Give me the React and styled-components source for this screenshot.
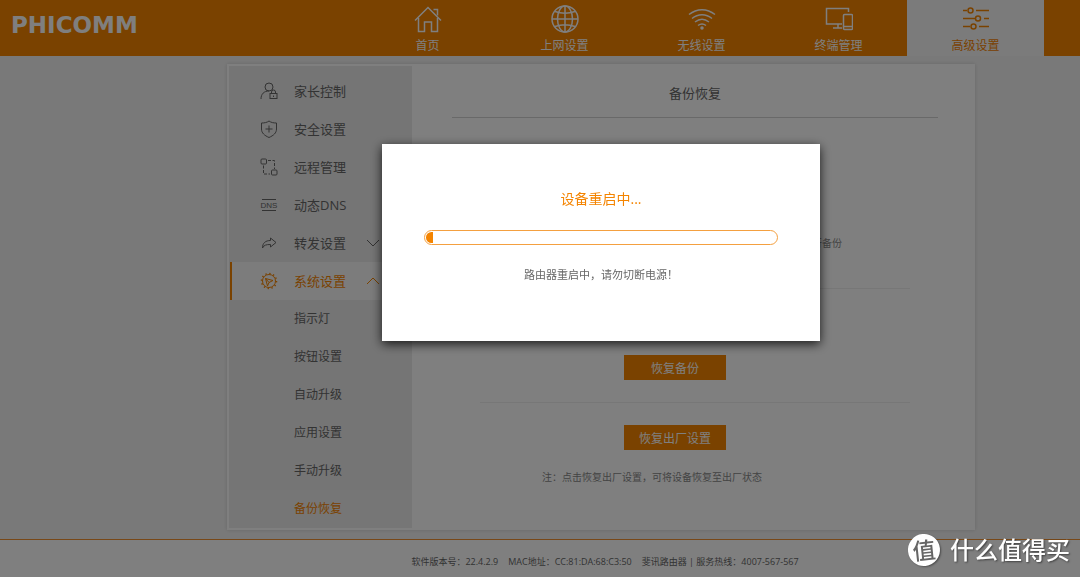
import React from "react";
import styled, { createGlobalStyle } from "styled-components";

const navItems = [
  { id: "home", label: "首页" },
  { id: "globe", label: "上网设置" },
  { id: "wifi", label: "无线设置" },
  { id: "devices", label: "终端管理" },
  { id: "sliders", label: "高级设置", active: true },
];

const menuItems = [
  { id: "parent", label: "家长控制" },
  { id: "shield", label: "安全设置" },
  { id: "remote", label: "远程管理" },
  { id: "dns", label: "动态DNS" },
  { id: "forward", label: "转发设置", arrow: "down" },
  { id: "gear", label: "系统设置", arrow: "up", active: true },
];

const subItems = ["指示灯", "按钮设置", "自动升级", "应用设置", "手动升级", "备份恢复"];

// Иконки верхнего меню
const navIcons = {
  home: (
    <>
      <path d="M1 15.500 14 2.500l13 13" />
      <path d="M4.500 13v13.500h6v-9.500h7v9.500h6V13" />
      <path d="M19.500 4.500h4v6" />
    </>
  ),
  globe: (
    <>
      <circle cx="14" cy="14" r="13" />
      <ellipse cx="14" cy="14" rx="7.500" ry="13" />
      <path d="M14 1v26M1 14h26M4 6.500c6 2 14 2 20 0M4 21.500c6-2 14-2 20 0" />
    </>
  ),
  wifi: (
    <>
      <path d="M1 9.500c8-6.500 18-6.500 26 0" />
      <path d="M4 13.500c6-5 14-5 20 0" />
      <path d="M7 17c4.500-3.500 9.500-3.500 14 0" />
      <path d="M10 20.500c2.500-2 5.500-2 8 0" />
      <circle cx="14" cy="23" r="1" fill="currentColor" />
    </>
  ),
  devices: (
    <>
      <path d="M23.500 7V3.500h-22v15.500h15.500" />
      <path d="M13 19v4M8 23h9" />
      <rect x="18.500" y="9.500" width="9" height="15" rx="1" />
      <path d="M18.500 21.500h9" />
    </>
  ),
  sliders: (
    <>
      <path d="M1 5.500h4M14 5.500h13M1 13.500h12M22 13.500h5M1 21.500h7M17 21.500h10" />
      <circle cx="8.500" cy="5.500" r="2.500" />
      <circle cx="16" cy="13.500" r="2.500" />
      <circle cx="11.500" cy="21.500" r="2.500" />
    </>
  ),
};

// Иконки боковой панели
const menuIcons = {
  parent: (
    <>
      <circle cx="9" cy="5" r="4" />
      <path d="M1 17c0-5 3-8 8-8" />
      <rect x="10" y="11.500" width="7" height="5" />
      <path d="M11.500 11.500V10a2 2 0 0 1 4 0v1.500M13.500 13.500v1.500" />
    </>
  ),
  shield: (
    <>
      <path d="M9 1c2 1.500 4.500 2 7.500 2v6c0 4-3 6.500-7.500 8.500C4.500 15.500 1.500 13 1.500 9V3C4.500 3 7 2.500 9 1z" />
      <path d="M9 5.500v7M5.500 9h7" />
    </>
  ),
  remote: (
    <>
      <rect x="1" y="1" width="5.500" height="5" rx="1" />
      <rect x="11.500" y="12" width="5.500" height="5" rx="1" />
      <path strokeDasharray="3 1.500" d="M8 2.500h6.500V11M3.500 7.500v8.500H10" />
    </>
  ),
  dns: (
    <>
      <path d="M2 3.500h14M2 14.500h14" />
      <text x="9" y="12" fontSize="8" textAnchor="middle" fill="currentColor" stroke="none" fontFamily="Liberation Sans, sans-serif">
        DNS
      </text>
    </>
  ),
  forward: (
    <path d="M10.500 4 16 8.500 10.500 13v-2.500C6 10.500 4 11 2.500 14 2.500 9 5.500 6.500 10.500 6.500z" />
  ),
  gear: (
    <>
      <circle cx="9" cy="9" r="6.500" />
      <circle cx="9" cy="9" r="7.500" strokeWidth="1.500" strokeDasharray="1.400 2.527" />
      <path d="M5.500 6.500 13 8.500 9 10.500 7.500 14zM5.500 6.500 9 10.500" />
    </>
  ),
};

const Icon = ({ size, children }) => (
  <IconSvg $size={size} viewBox={`0 0 ${size} ${size}`} aria-hidden="true">
    {children}
  </IconSvg>
);

const RebootModal = ({ progress }) => (
  <Overlay>
    <ModalCon role="dialog" aria-modal="true" aria-labelledby="reboot-title">
      <ModalTitle id="reboot-title">设备重启中...</ModalTitle>
      <ProgressTrack role="progressbar" aria-labelledby="reboot-title" aria-valuenow={progress}>
        <ProgressFill style={{ width: `${progress}%` }} />
      </ProgressTrack>
      <ModalMessage>路由器重启中，请勿切断电源！</ModalMessage>
    </ModalCon>
  </Overlay>
);

const App = () => {
  return (
    <>
      <GlobalStyle />
      <Page>
        <Header>
          <Logo>PHICOMM</Logo>
          <Nav>
            {navItems.map((item) => (
              <NavLink key={item.id} href="#" $active={item.active}>
                <Icon size={28}>{navIcons[item.id]}</Icon>
                {item.label}
              </NavLink>
            ))}
          </Nav>
        </Header>

        <Body>
          <Card>
            <Sidebar>
              {menuItems.map((item) => (
                <MenuLink key={item.id} href="#" $active={item.active}>
                  <Icon size={18}>{menuIcons[item.id]}</Icon>
                  <MenuLabel>{item.label}</MenuLabel>
                  {item.arrow && (
                    <Icon size={14}>
                      <path d={item.arrow === "up" ? "M1 10l6-6 6 6" : "M1 4l6 6 6-6"} />
                    </Icon>
                  )}
                </MenuLink>
              ))}
              {subItems.map((label) => (
                <SubLink key={label} href="#" $active={label === "备份恢复"}>
                  {label}
                </SubLink>
              ))}
            </Sidebar>

            <Content>
              <ContentTitle>备份恢复</ContentTitle>
              <Section $top={73} $bottom={34}>
                <Button>备份</Button>
                <Note>注：点击备份，可将当前设备的配置信息保存到本地电脑中进行备份</Note>
              </Section>
              <Section $top={66} $bottom={22}>
                <Button>恢复备份</Button>
              </Section>
              <Section $top={22} $bottom={0}>
                <Button>恢复出厂设置</Button>
                <Note>注：点击恢复出厂设置，可将设备恢复至出厂状态</Note>
              </Section>
            </Content>
          </Card>
        </Body>

        <Footer>
          <span>软件版本号：22.4.2.9</span>
          <span>MAC地址：CC:81:DA:68:C3:50</span>
          <span>斐讯路由器 | 服务热线：4007-567-567</span>
        </Footer>
      </Page>

      <RebootModal progress={2} />

      <Watermark>
        <WatermarkBadge>值</WatermarkBadge>
        什么值得买
      </Watermark>
    </>
  );
};

export default App;

const GlobalStyle = createGlobalStyle`
  * {
    box-sizing: border-box;
  }
  body {
    margin: 0;
    background-color: #f3f3f3;
    color: #666;
    font-family: "Open Sans", "Noto Sans CJK SC", sans-serif;
    font-size: 12px;
  }
  a {
    color: inherit;
    text-decoration: none;
  }
`;

const Page = styled.div`
  display: flex;
  flex-direction: column;
  min-height: 100vh;
`;

const IconSvg = styled.svg`
  flex: none;
  width: ${({ $size }) => $size}px;
  height: ${({ $size }) => $size}px;
  fill: none;
  stroke: currentColor;
  stroke-width: ${({ $size }) => ($size === 28 ? 1.5 : 1)};
`;

const Header = styled.header`
  display: flex;
  justify-content: space-between;
  height: 56px;
  padding: 0 36px 0 11px;
  background-color: #f48400;
  color: #fff;
`;

const Logo = styled.div`
  font-family: "DejaVu Sans", sans-serif;
  font-size: 23px;
  font-weight: bold;
  line-height: 50px;
`;

const Nav = styled.nav`
  display: flex;
`;

const NavLink = styled.a`
  display: flex;
  flex-direction: column;
  align-items: center;
  gap: 5px;
  width: 137px;
  padding-top: 5px;
  line-height: 16px;
  && {
    color: ${({ $active }) => ($active ? "#f48400" : "#fff")};
  }
  background-color: ${({ $active }) => ($active ? "#f7f7f7" : "transparent")};
`;

const Body = styled.main`
  flex: 1;
  padding: 8px 105px 8px 227px;
`;

const Card = styled.div`
  display: flex;
  padding: 2px;
  background-color: #fff;
  box-shadow: 0 0 4px rgba(0, 0, 0, 0.15);
`;

const Sidebar = styled.nav`
  flex: none;
  width: 183px;
  padding-top: 6px;
  background-color: #eaeaea;
`;

const MenuLink = styled.a`
  display: flex;
  align-items: center;
  gap: 16px;
  height: 38px;
  margin-left: 1px;
  padding: 0 32px 0 28px;
  border-left: 2px solid ${({ $active }) => ($active ? "#f48400" : "transparent")};
  background-color: ${({ $active }) => ($active ? "#f8f8f8" : "transparent")};
  && {
    color: ${({ $active }) => ($active ? "#f48400" : "#666")};
  }
`;

const MenuLabel = styled.span`
  flex: 1;
  padding-bottom: 2px;
  font-size: 13px;
  white-space: nowrap;
`;

const SubLink = styled.a`
  display: block;
  height: 38px;
  padding-left: 65px;
  line-height: 38px;
  && {
    color: ${({ $active }) => ($active ? "#f48400" : "#666")};
  }
  background-color: ${({ $active }) => ($active ? "#ededed" : "transparent")};
`;

const Content = styled.section`
  flex: 1;
  padding: 0 35px 0 40px;
`;

const ContentTitle = styled.h2`
  margin: 0;
  padding: 3px 0 0;
  border-bottom: 1px solid #d2d2d2;
  font-size: 13px;
  font-weight: normal;
  line-height: 48px;
  text-align: center;
`;

const Section = styled.div`
  margin: 0 28px;
  padding: ${({ $top, $bottom }) => `${$top}px 0 ${$bottom}px 62px`};
  border-bottom: 1px solid #efefef;
  &:last-child {
    border-bottom: none;
  }
`;

const Button = styled.button`
  display: block;
  width: 102px;
  height: 25px;
  margin-left: 82px;
  padding: 0;
  border: none;
  background-color: #f48400;
  color: #fff;
  font-family: inherit;
  font-size: 12px;
`;

const Note = styled.p`
  margin: 17px 0 0;
  padding-bottom: 1px;
  color: #888;
  font-size: 10px;
  line-height: 20px;
  white-space: nowrap;
`;

const Footer = styled.footer`
  display: flex;
  justify-content: center;
  gap: 10px;
  height: 38px;
  padding: 12px 97px 0 227px;
  border-top: 1px solid #f09030;
  background-color: #fff;
  font-size: 9px;
  line-height: 20px;
`;

const Overlay = styled.div`
  position: fixed;
  inset: 0;
  display: flex;
  justify-content: center;
  align-items: flex-start;
  padding: 144px 105px 0 227px;
  background-color: rgba(0, 0, 0, 0.5);
  z-index: 1000;
`;

const ModalCon = styled.div`
  width: 438px;
  padding: 44px 42px 56px;
  background-color: #fff;
  box-shadow: 0 3px 10px rgba(0, 0, 0, 0.8);
  text-align: center;
`;

const ModalTitle = styled.h2`
  margin: 0;
  color: #f48400;
  font-size: 14px;
  font-weight: normal;
  line-height: 22px;
`;

const ProgressTrack = styled.div`
  height: 15px;
  margin: 20px 0;
  padding: 1px;
  border: 1px solid #f4a040;
  border-radius: 8px;
  overflow: hidden;
`;

const ProgressFill = styled.div`
  height: 100%;
  border-radius: 6px 0 0 6px;
  background-color: #f48400;
`;

const ModalMessage = styled.p`
  margin: 0;
  font-size: 11px;
  line-height: 20px;
`;

const Watermark = styled.div`
  position: fixed;
  right: 10px;
  bottom: 11px;
  display: flex;
  align-items: center;
  gap: 10px;
  color: #fff;
  font-size: 24px;
  font-weight: 500;
  line-height: 32px;
  text-shadow: 1px 1px 2px rgba(0, 0, 0, 0.5);
  z-index: 1001;
`;

const WatermarkBadge = styled.span`
  width: 32px;
  height: 32px;
  border-radius: 50%;
  background-color: #fff;
  box-shadow: 1px 1px 2px rgba(0, 0, 0, 0.4);
  color: #666;
  font-size: 23px;
  text-align: center;
  text-shadow: none;
  transform: rotate(-6deg);
`;
